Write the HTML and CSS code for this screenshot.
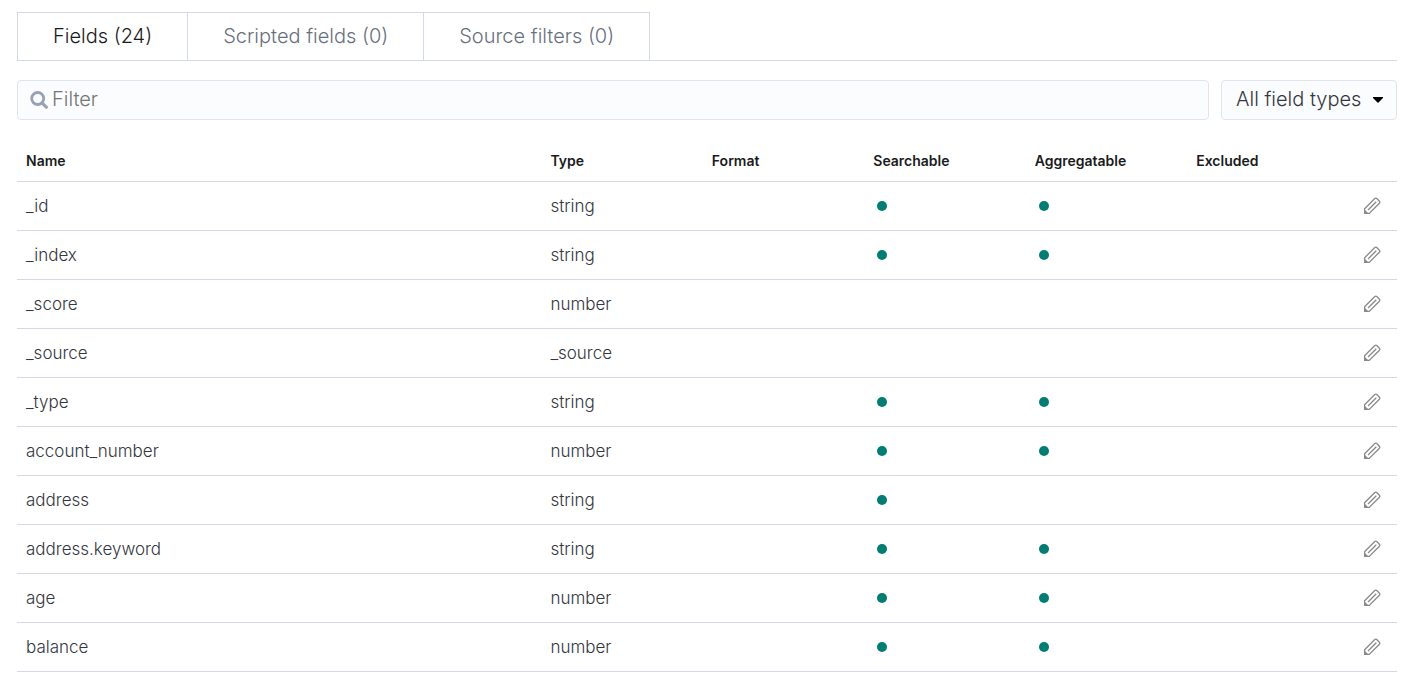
FILE: index.html
```html
<!DOCTYPE html>
<html lang="en">
<head>
<meta charset="utf-8">
<meta name="viewport" content="width=device-width, initial-scale=1">
<title>Index pattern fields</title>
<link rel="stylesheet" href="styles.css">
</head>
<body>
<svg class="sprite" aria-hidden="true">
  <symbol id="pencil" viewBox="0 0 18 18">
    <path d="M1.6 11.8 11.8 1.6Q12.8 .8 13.8 1.6L16.4 4.2Q17.2 5.2 16.4 6.2L6.2 16.4H1.6Z" fill="none" stroke="currentColor" stroke-width="1.3"/>
    <path d="M5 13 13.3 4.7" fill="none" stroke="currentColor" stroke-width="1.3"/>
    <path d="M1 12 6 17H1Z" fill="currentColor"/>
  </symbol>
</svg>
<main class="page">
  <div class="tabs" role="tablist">
    <button class="tab tab-selected" type="button" role="tab" aria-selected="true">Fields (24)</button>
    <button class="tab" type="button" role="tab" aria-selected="false">Scripted fields (0)</button>
    <button class="tab" type="button" role="tab" aria-selected="false">Source filters (0)</button>
  </div>
  <div class="toolbar">
    <label class="search">
      <svg class="search-icon" viewBox="0 0 18 18" aria-hidden="true"><circle cx="7.7" cy="7.5" r="6" fill="none" stroke="currentColor" stroke-width="2.8"/><path d="M12.2 12.2 16.3 16.2" stroke="currentColor" stroke-width="3.2" stroke-linecap="round"/></svg>
      <input class="search-input" type="text" placeholder="Filter" aria-label="Filter">
    </label>
    <div class="select-wrap">
      <select class="select" aria-label="Field type"><option>All field types</option></select>
      <svg class="caret" viewBox="0 0 10 6" aria-hidden="true"><path d="M0 0H10V1L5 6 0 1Z" fill="currentColor"/></svg>
    </div>
  </div>
  <table class="fields">
    <colgroup><col class="col-name"><col class="col-info"><col class="col-info"><col class="col-info"><col class="col-info"><col></colgroup>
    <thead>
      <tr><th scope="col">Name</th><th scope="col">Type</th><th scope="col">Format</th><th scope="col">Searchable</th><th scope="col">Aggregatable</th><th scope="col">Excluded</th></tr>
    </thead>
    <tbody>
      <tr><td>_id</td><td>string</td><td></td><td><span class="dot" role="img" aria-label="Yes"></span></td><td><span class="dot" role="img" aria-label="Yes"></span></td><td class="actions"><button class="edit" type="button" aria-label="Edit"><svg class="edit-icon"><use href="#pencil"/></svg></button></td></tr>
      <tr><td>_index</td><td>string</td><td></td><td><span class="dot" role="img" aria-label="Yes"></span></td><td><span class="dot" role="img" aria-label="Yes"></span></td><td class="actions"><button class="edit" type="button" aria-label="Edit"><svg class="edit-icon"><use href="#pencil"/></svg></button></td></tr>
      <tr><td>_score</td><td>number</td><td></td><td></td><td></td><td class="actions"><button class="edit" type="button" aria-label="Edit"><svg class="edit-icon"><use href="#pencil"/></svg></button></td></tr>
      <tr><td>_source</td><td>_source</td><td></td><td></td><td></td><td class="actions"><button class="edit" type="button" aria-label="Edit"><svg class="edit-icon"><use href="#pencil"/></svg></button></td></tr>
      <tr><td>_type</td><td>string</td><td></td><td><span class="dot" role="img" aria-label="Yes"></span></td><td><span class="dot" role="img" aria-label="Yes"></span></td><td class="actions"><button class="edit" type="button" aria-label="Edit"><svg class="edit-icon"><use href="#pencil"/></svg></button></td></tr>
      <tr><td>account_number</td><td>number</td><td></td><td><span class="dot" role="img" aria-label="Yes"></span></td><td><span class="dot" role="img" aria-label="Yes"></span></td><td class="actions"><button class="edit" type="button" aria-label="Edit"><svg class="edit-icon"><use href="#pencil"/></svg></button></td></tr>
      <tr><td>address</td><td>string</td><td></td><td><span class="dot" role="img" aria-label="Yes"></span></td><td></td><td class="actions"><button class="edit" type="button" aria-label="Edit"><svg class="edit-icon"><use href="#pencil"/></svg></button></td></tr>
      <tr><td>address.keyword</td><td>string</td><td></td><td><span class="dot" role="img" aria-label="Yes"></span></td><td><span class="dot" role="img" aria-label="Yes"></span></td><td class="actions"><button class="edit" type="button" aria-label="Edit"><svg class="edit-icon"><use href="#pencil"/></svg></button></td></tr>
      <tr><td>age</td><td>number</td><td></td><td><span class="dot" role="img" aria-label="Yes"></span></td><td><span class="dot" role="img" aria-label="Yes"></span></td><td class="actions"><button class="edit" type="button" aria-label="Edit"><svg class="edit-icon"><use href="#pencil"/></svg></button></td></tr>
      <tr><td>balance</td><td>number</td><td></td><td><span class="dot" role="img" aria-label="Yes"></span></td><td><span class="dot" role="img" aria-label="Yes"></span></td><td class="actions"><button class="edit" type="button" aria-label="Edit"><svg class="edit-icon"><use href="#pencil"/></svg></button></td></tr>
    </tbody>
  </table>
</main>
</body>
</html>
```
FILE: styles.css
```css
* { box-sizing: border-box; }

body {
  margin: 0;
  background: #fff;
  color: #343741;
  font-family: Inter, "Liberation Sans", sans-serif;
  font-size: 17px;
  font-weight: 300;
}

button, input, select { font: inherit; color: inherit; }

.sprite { display: none; }

.page { padding: 12px 24px 0 17px; }

.tabs {
  display: flex;
  border-bottom: 1px solid #d3dae6;
}

.tab {
  padding: 0 35px;
  border: 1px solid #d3dae6;
  border-width: 1px 1px 0 0;
  background: #fff;
  color: #69707d;
  font-size: 20px;
  line-height: 47px;
  cursor: pointer;
}

.tab:first-child { border-left-width: 1px; }

.tab-selected { color: #1a1c21; }

.toolbar {
  display: flex;
  gap: 12px;
  margin-top: 19px;
}

.search, .select {
  height: 40px;
  border: 1px solid #e0e4ee;
  border-radius: 4px;
  background: #fbfcfd;
  font-size: 20px;
}

.search {
  display: flex;
  flex: 1;
  align-items: center;
  gap: 4px;
  padding: 0 12px;
}

.search-icon {
  width: 18px;
  height: 18px;
  color: #98a2b3;
}

.search-input {
  flex: 1;
  min-width: 0;
  padding: 0 0 2px;
  border: 0;
  outline: 0;
  background: none;
}

.search-input::placeholder { color: #757575; opacity: 1; }

.select-wrap { position: relative; }

.select {
  padding: 0 34px 2px 14px;
  appearance: none;
}

.caret {
  position: absolute;
  top: 17px;
  right: 14px;
  width: 10px;
  height: 6px;
  color: #000;
  pointer-events: none;
}

.fields {
  width: 100%;
  margin-top: 20px;
  border-collapse: separate;
  border-spacing: 0;
  table-layout: fixed;
}

.col-name { width: 38%; }
.col-info { width: 11.7%; }

.fields th, .fields td {
  padding: 0 9px;
  border-bottom: 1px solid #d3dae6;
  text-align: left;
}

.fields th {
  height: 42px;
  color: #1a1c21;
  font-size: 14px;
  font-weight: 600;
}

.fields td {
  height: 49px;
  padding-bottom: 1px;
}

.dot {
  display: block;
  width: 10px;
  height: 10px;
  margin-left: 4px;
  border-radius: 50%;
  background: #017d73;
}

.fields .actions { padding-right: 16px; }

.edit {
  display: block;
  margin-left: auto;
  padding: 0;
  border: 0;
  background: none;
  color: #8a8a8a;
  cursor: pointer;
}

.edit-icon {
  display: block;
  width: 18px;
  height: 18px;
}
```
